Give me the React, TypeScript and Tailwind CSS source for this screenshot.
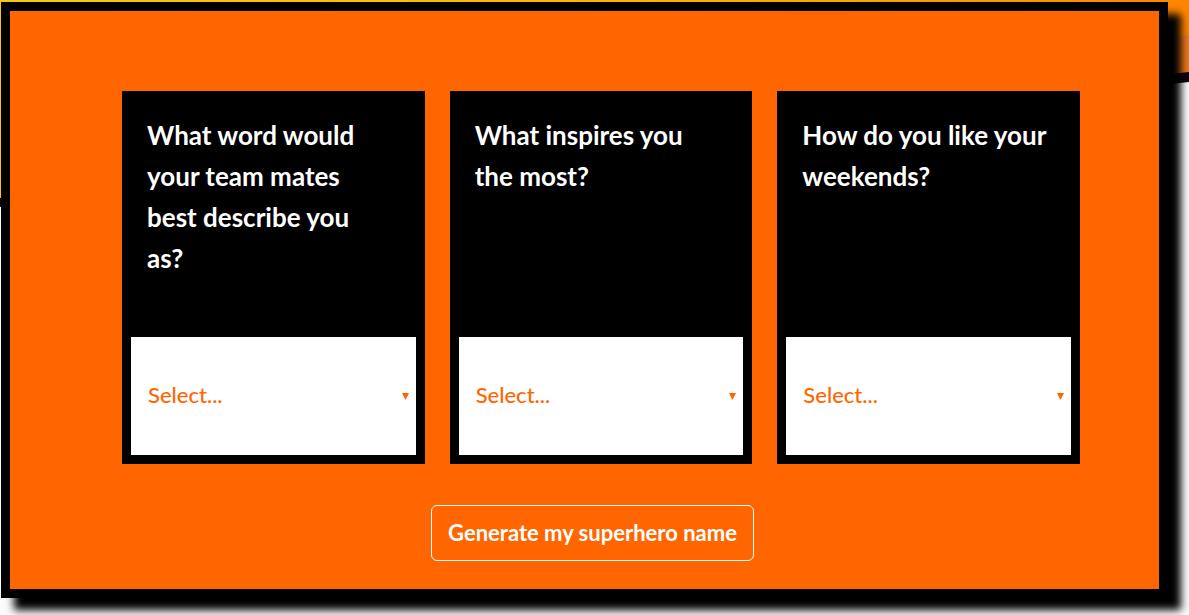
const QUESTIONS = [
  {
    id: "word",
    text: "What word would your team mates best describe you\nas?",
    options: ["Brave", "Clever", "Kind", "Funny"],
  },
  {
    id: "inspires",
    text: "What inspires you the most?",
    options: ["Nature", "Music", "People", "Travel"],
  },
  {
    id: "weekends",
    text: "How do you like your weekends?",
    options: ["Relaxed", "Active", "Social", "Creative"],
  },
];

function Backdrop() {
  return (
    <svg
      className="absolute inset-0 -z-10 h-full w-full"
      viewBox="0 0 1189 615"
      preserveAspectRatio="none"
      aria-hidden="true"
    >
      <defs>
        <linearGradient id="sky" x1="0" x2="1" y1="0" y2="0">
          <stop offset="0" stopColor="#f4c90f" />
          <stop offset="0.45" stopColor="#ffb800" />
          <stop offset="0.9" stopColor="#ff9000" />
          <stop offset="1" stopColor="#ff8500" />
        </linearGradient>
      </defs>
      <rect width="1189" height="615" fill="#fbfbfd" />
      <path d="M0 0H1189V77L0 202Z" fill="url(#sky)" />
      <path d="M1189 34V77L1150 80V48Z" fill="#ec791c" />
      <path d="M0 198L1189 72V82L0 207Z" fill="#140010" />
    </svg>
  );
}

function QuestionCard({ id, text, options }: (typeof QUESTIONS)[number]) {
  return (
    <div className="flex flex-col bg-black">
      <label
        htmlFor={id}
        className="min-h-[246px] grow pt-6 pr-8 pl-[25px] text-[26px] leading-[41px] font-bold whitespace-pre-line text-white"
      >
        {text}
      </label>
      <div className="relative mx-[9px] mb-[9px]">
        <select
          id={id}
          defaultValue=""
          className="block h-[118px] w-full appearance-none rounded-none bg-white pr-6 pb-1 pl-[17px] text-[22px] font-medium text-[#ff6600]"
        >
          <option value="">Select...</option>
          {options.map((option) => (
            <option key={option}>{option}</option>
          ))}
        </select>
        <svg
          className="pointer-events-none absolute inset-y-0 right-[7px] my-auto h-[7px] w-[7px]"
          viewBox="0 0 7 7"
          aria-hidden="true"
        >
          <path d="M0 0H7L3.5 7Z" fill="#ff6600" />
        </svg>
      </div>
    </div>
  );
}

export default function App() {
  return (
    <div className="relative isolate min-h-screen overflow-hidden pt-0.5 pr-[21px] pb-[17px] pl-px font-['Lato',sans-serif]">
      <Backdrop />
      <main className="border-[9px] border-black bg-[#ff6600] pt-20 pb-7 shadow-[13px_12px_8px_#000]">
        <form onSubmit={(event) => event.preventDefault()}>
          <div className="grid grid-cols-3 gap-[25px] pr-[79px] pl-28">
            {QUESTIONS.map((question) => (
              <QuestionCard key={question.id} {...question} />
            ))}
          </div>
          <div className="mt-[41px] flex justify-center pl-4">
            <button
              type="submit"
              className="h-14 rounded-md border border-white px-4 pb-0.5 text-[22px] font-bold text-white"
            >
              Generate my superhero name
            </button>
          </div>
        </form>
      </main>
    </div>
  );
}
